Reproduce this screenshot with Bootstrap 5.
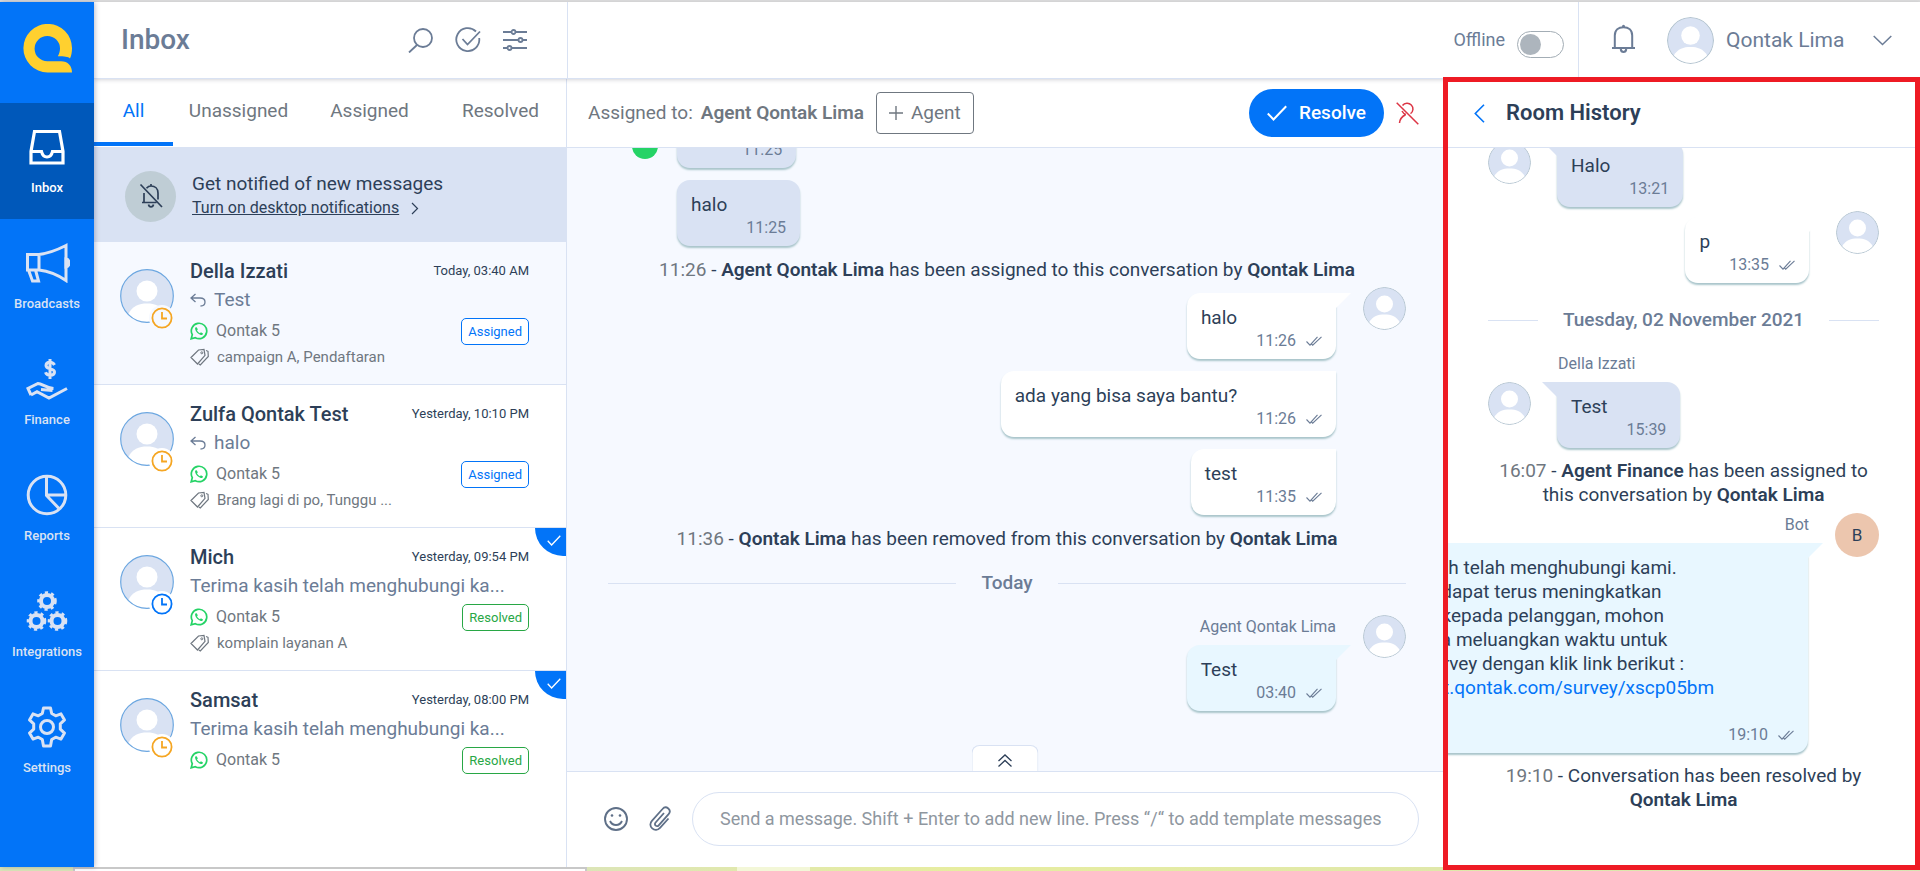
<!DOCTYPE html>
<html lang="en">
<head>
<meta charset="utf-8">
<meta name="viewport" content="width=device-width, initial-scale=1">
<title>Inbox</title>
<link href="https://cdn.jsdelivr.net/npm/bootstrap@5.3.0/dist/css/bootstrap.min.css" rel="stylesheet">
<style>
:root{--blue:#0274f8;--navy:#2d3f58;--slate:#6b7c96;--gray:#6f7780;--line:#d9e2f3;--mist:#f6f9ff;--cyan:#e8f7ff}
body{font-family:Roboto,"Liberation Sans",sans-serif;font-size:19px;line-height:24px;color:var(--navy);background:#fff}
svg{display:block;fill:none;stroke:currentColor;flex:none}
.page{height:100vh;border-top:2px solid #ddd}
.side{width:94px;background:var(--blue);box-shadow:1px 0 5px rgba(30,40,90,.3);z-index:3}
.brand-box{height:101px;padding:22px 0 0 23px}
.side .nav-link{height:116px;padding:20px 0 0;color:#d9e2f3;font-size:13px;line-height:18px;font-weight:500}
.side .nav-link.active{background:#0058ba;color:#fff}
.side .ico{height:48px}
.topbar{height:77px;border-bottom:1px solid var(--line);box-shadow:0 1px 4px rgba(60,60,80,.22);color:var(--slate);z-index:2}
.topbar-left{width:474px;padding:0 40px 0 27px;gap:22px;border-right:1px solid var(--line)}
.topbar h1{font-size:28px;line-height:30px;font-weight:500}
.topbar-user{width:342px;border-left:1px solid var(--line);padding:0 28px 0 33px;font-size:21px}
.icon-btn{padding:0;border:0;background:none;color:inherit}
.status{gap:12px;margin-right:14px}
.status-label{font-size:18px}
.status-switch.form-check-input{width:47px;height:27px;margin:0;border:1px solid #a3adb5;background-color:#fff;background-image:none;position:relative}
.status-switch::before{content:"";position:absolute;left:2px;top:2px;width:21px;height:21px;border-radius:50%;background:#adb5bd}
.rooms{width:473px;border-right:1px solid var(--line)}
.tabs{height:68px}
.tabs .nav-link{color:var(--gray);padding:20px 0 0;text-align:center;flex:1;height:67px}
.tabs .nav-link.active{flex:0 0 79px;color:var(--blue);border-bottom:4px solid var(--blue)}
.notice{height:95px;background:var(--line);padding:3px 31px 0;gap:16px}
.notice-ico{width:51px;height:51px;border-radius:50%;background:#bfcdd5}
.notice a{font-size:16px;color:inherit}
.room{padding:15px 37px 17px 26px;border-bottom:1px solid var(--line);gap:16px;position:relative}
.room:last-child{border-bottom:0}
.room.current{background:var(--mist)}
.face{width:43px;height:43px;border-radius:50%;position:relative;flex:none}
.room .face{width:54px;height:54px;margin-top:12px}
.topbar .face{width:47px;height:47px;margin-left:32px}
.clock{position:absolute;right:-1px;bottom:-8px;border-radius:50%;background:#fff;padding:2px;color:#f5a623}
.room.current .clock{background:var(--mist)}
.clock.open{color:var(--blue)}
.room-name{font-size:20px;line-height:28px;font-weight:500}
.room-date{font-size:13px;line-height:28px}
.room-text{line-height:30px;color:var(--slate)}
.room-channel{font-size:16px;line-height:32px;color:var(--gray)}
.room-tags{font-size:15px;line-height:20px;color:var(--gray)}
.tag-state{border:1px solid;border-radius:5px;font-size:13px;line-height:25px;padding:0 6px;color:var(--blue);background:#fff}
.tag-state.done{color:#28a745}
.corner{position:absolute;right:0;top:0;width:31px;height:28px;border-radius:0 0 0 28px;background:var(--blue);color:#fff;padding:7px 0 0 11px}
.chat-head{height:69px;border-bottom:1px solid var(--line);padding:0 24px 0 21px;color:var(--gray)}
.btn-agent{--bs-btn-padding-x:12px;--bs-btn-padding-y:8px;--bs-btn-font-size:19px;--bs-btn-line-height:24px;--bs-btn-color:#6f7780;--bs-btn-border-color:#6f7780;--bs-btn-border-radius:4px}
.btn-resolve{--bs-btn-padding-x:17px;--bs-btn-padding-y:11px;--bs-btn-font-size:19px;--bs-btn-line-height:24px;--bs-btn-bg:#0274f8;--bs-btn-color:#fff;--bs-btn-font-weight:500;--bs-btn-border-radius:24px}
.log{background:var(--mist);padding:0 37px 60px 41px;overflow:hidden;min-height:0}
.entry{gap:26px;align-items:flex-start;flex:none}
.entry + .entry{margin-top:12px}
.entry.out{flex-direction:row-reverse;gap:27px}
.entry.out .face{margin-top:-6px}
.entry.out .face.raised{margin-top:-30px}
.entry.out.follow{margin-right:70px}
.entry.follow-in{margin-left:69px}
.bubble{display:grid;grid-template-columns:auto auto;padding:13px 14px 7px;height:66px;white-space:nowrap;border-radius:13px;background:var(--line);position:relative;box-shadow:0 2px 2px #a9c5cb;flex:none;line-height:24px}
.bubble .when{grid-area:2/2;font-size:16px;line-height:22px;color:var(--slate);padding-left:19px;display:flex;align-items:center;gap:10px}
.bubble.tall{height:auto}
.bubble.tall .when{padding-left:14px}
.out .bubble{background:#fff;border-top-right-radius:0}
.out .bubble.mine{background:var(--cyan)}
.tail::after{content:"";position:absolute;top:0;left:-15px;width:30px;height:15px;background:inherit;clip-path:polygon(0 0,100% 0,50% 100%)}
.out .tail::after{left:auto;right:-15px}
.who{font-size:16px;line-height:20px;color:var(--slate)}
.event{text-align:center;margin:12px 0 11px;flex:none}
.event time{color:var(--gray)}
.event b,.assignee{font-weight:600}
.day{display:flex;align-items:center;font-weight:500;color:var(--slate);flex:none;margin:20px 0 22px}
.day::before,.day::after{content:"";height:1px;background:var(--line);flex:1}
.day span{padding:0 25px}
.wa-dot{position:absolute;width:26px;height:26px;border-radius:50%;right:-7px;bottom:-14px;background:#25d366}
.expand{position:absolute;left:50%;bottom:0;transform:translateX(-50%);width:67px;height:26px;padding:4px 0 0;border:1px solid var(--line);border-bottom:0;border-radius:8px 8px 0 0;background:#fff;color:var(--navy)}
.composer{height:96px;border-top:1px solid var(--line);padding:0 24px 2px 37px;gap:21px;color:#5f7088}
.composer input.form-control{height:54px;border-radius:27px;border:1px solid var(--line);padding:0 27px;font-size:18px;color:var(--navy)}
.composer input::placeholder{color:#8f979f}
.history{width:477px;margin:-2px 0 -3px;border:5px solid #ee1b24;z-index:4;background:#fff}
.history-head{height:66px;border-bottom:1px solid var(--line);padding:0 26px 3px;gap:21px}
.history-head h2{font-size:22px;line-height:24px;font-weight:600}
.history-log{padding:0 36px 53px 40px;overflow:hidden;min-height:0}
.history .entry + .entry{margin-top:10px}
.history .event{margin-top:11px}
.history .day{margin-top:25px}
.bot-face{width:44px;height:44px;background:#ecc6ae;font-size:17px;text-align:center;line-height:44px}
.ground{height:4px;background:linear-gradient(90deg,#dce5b8 30%,#e7eda0 50%,#d9e3b4)}
.ground-window{width:514px;margin-left:73px;height:4px;background:#fff;border:solid #c8c8c8;border-width:2px 2px 0}
.ground-glow{width:73px;height:4px;margin-left:150px;background:#f3f7d8}
</style>
</head>
<body>
<svg width="0" height="0" class="position-absolute" aria-hidden="true">
  <symbol id="person" viewBox="0 0 43 43"><circle cx="21.500" cy="21.500" r="21" fill="#d9e2f3" stroke="none"/><circle cx="21.500" cy="17" r="8.500" fill="#fff" stroke="none"/><path d="M6 35.500C10 29 15 27.500 21.500 27.500S33 29 37 35.500C33 40 28 42.500 21.500 42.500S10 40 6 35.500Z" fill="#fff" stroke="none"/><circle cx="21.500" cy="21.500" r="21" fill="none" stroke="#b5c5d0" stroke-width="1"/></symbol>
  <symbol id="person-blue" viewBox="0 0 54 54"><circle cx="27" cy="27" r="26" fill="#d9e2f3" stroke="none"/><circle cx="27" cy="22" r="10.500" fill="#fff" stroke="none"/><path d="M8.500 45C12 37 19 34.500 27 34.500S42 37 45.500 45C41 50 35 53 27 53S13 50 8.500 45Z" fill="#fff" stroke="none"/><circle cx="27" cy="27" r="26.300" fill="none" stroke="#6ba6e0" stroke-width="1.200"/></symbol>
  <symbol id="clock" viewBox="0 0 22 22"><circle cx="11" cy="11" r="9.600" stroke-width="1.800"/><path d="M11 5v6.500h5" stroke-width="1.800"/></symbol>
  <symbol id="ticks" viewBox="0 0 16 10"><path d="M.5 5.500 4 9.200 11.500.8M5 7.500l1.700 1.700L15.500.8" stroke-width="1.100"/></symbol>
  <symbol id="reply" viewBox="0 0 16 14"><path d="M5.500 1 1 5l4.500 4M1.500 5H10c3 0 5 1.500 5 4s-1.500 4-4.500 4" stroke-width="1.300"/></symbol>
  <symbol id="wa" viewBox="0 0 18 18"><path d="M1.200 16.800l1.100-4.100A7.700 7.700 0 1 1 5.300 15.700Z" stroke="#25d366" stroke-width="1.700"/><path d="M6.300 4.900c-.8.200-1.400 1.100-1.200 2.200.5 2.800 3 5.300 5.700 5.900 1.100.2 2-.4 2.200-1.500l-2.100-1.300-.9 1C8.700 10.700 7.600 9.600 7 8.200l.9-.9Z" fill="#25d366" stroke="none"/></symbol>
  <symbol id="tags" viewBox="0 0 19 18"><path d="M1 9.500 8.500 2 14 1.300l1 6L7.500 16ZM16 2.500l2 .8.300 5.200-8 8.500-1.500-1" stroke-width="1.200"/><circle cx="11.800" cy="4.800" r="1" stroke-width="1"/></symbol>
  <symbol id="tick" viewBox="0 0 20 16"><path d="M.8 8.500 6.500 14.500 19.200 1.200" stroke-width="2"/></symbol>
</svg>

<div class="page d-flex flex-column">
<div class="d-flex flex-fill" style="min-height:0">
  <nav class="side d-flex flex-column flex-shrink-0 position-relative">
    <a class="brand-box d-block" href="#" aria-label="Home"><svg width="49" height="49" viewBox="0 0 49 49"><path fill="#ffd02f" stroke="none" d="M49 48.500H24.500A24.300 24.300 0 1 1 49 24.300C49 28.200 48.400 31.500 47 34.500 45 32.700 41.500 32.300 34.800 32.300 36.200 30 37 27.300 37 24.500A12.700 12.700 0 1 0 24.300 37.300H38C45 37.300 49 42 49 48.500Z"/></svg></a>
    <div class="nav flex-column text-center">
      <a class="nav-link active" href="#"><span class="ico d-flex justify-content-center align-items-center"><svg width="36" height="36" viewBox="0 0 36 36" stroke-width="3.200"><path d="M5.500 2.500h25l3.500 20v11.500H2V22.500ZM2 22.500h10.500c.8 3.500 2.500 5.500 5.500 5.500s4.700-2 5.500-5.500H34"/></svg></span><span class="d-block mt-2">Inbox</span></a>
      <a class="nav-link" href="#"><span class="ico d-flex justify-content-center align-items-center"><svg width="46" height="40" viewBox="0 0 46 40" stroke-width="3"><path d="M3.500 11.500H15C24 10.500 35 6 42 2.500v35C34 32 24 28 15 27H3.500ZM15 11.500V27M4.500 27l4 11h6L11.500 27"/><path d="M42 16v8c4-.5 4-7.500 0-8Z" fill="currentColor"/></svg></span><span class="d-block mt-2">Broadcasts</span></a>
      <a class="nav-link" href="#"><span class="ico d-flex justify-content-center align-items-center"><svg width="42" height="42" viewBox="0 0 42 42" stroke-width="3"><path d="M28.500 7c-1-2-2.500-2.700-4.500-2.700-2.500 0-4 1.200-4 3.200 0 4.500 8.500 2.200 8.500 6.500 0 2-1.700 3.300-4.300 3.300-2.400 0-4-1-4.700-3M24 1v20"/><path d="M5 37 2 30.500 12 25.500C16 25.500 20 30 27.500 30.500M5 37l6-3.300L23 40l18-9.500M15 31.500l11.500 1"/></svg></span><span class="d-block mt-2">Finance</span></a>
      <a class="nav-link" href="#"><span class="ico d-flex justify-content-center align-items-center"><svg width="42" height="42" viewBox="0 0 42 42" stroke-width="3"><circle cx="21" cy="21" r="18.800"/><path d="M20.500 2v19.500L33.500 35M20.500 21H40"/></svg></span><span class="d-block mt-2">Reports</span></a>
      <a class="nav-link" href="#"><span class="ico d-flex justify-content-center align-items-center"><svg width="42" height="42" viewBox="0 0 42 42"><g stroke-width="4"><circle cx="21" cy="11" r="6"/><circle cx="10.500" cy="31" r="6"/><circle cx="31.500" cy="31" r="6"/></g><g stroke-width="2.600" stroke-dasharray="3.200 3.080"><circle cx="21" cy="11" r="8.500"/><circle cx="10.500" cy="31" r="8.500"/><circle cx="31.500" cy="31" r="8.500"/></g></svg></span><span class="d-block mt-2">Integrations</span></a>
      <a class="nav-link" href="#"><span class="ico d-flex justify-content-center align-items-center"><svg width="42" height="42" viewBox="0 0 42 42" stroke-width="3" stroke-linejoin="round"><circle cx="21" cy="21" r="6.500"/><path d="M17.500 2h7l1.200 5.500 4 2.300 5.300-1.900 3.500 6-4.200 3.900v5.400l4.200 3.900-3.500 6-5.300-1.900-4 2.300L24.500 40h-7l-1.200-6.500-4-2.300L7 33.100l-3.500-6 4.200-3.900v-5.400L3.500 13.900l3.500-6 5.300 1.900 4-2.300Z"/></svg></span><span class="d-block mt-2">Settings</span></a>
    </div>
  </nav>

  <div class="d-flex flex-column flex-fill" style="min-width:0">
    <header class="topbar d-flex flex-shrink-0 position-relative bg-white">
      <div class="topbar-left d-flex align-items-center">
        <h1 class="m-0 me-auto">Inbox</h1>
        <button class="icon-btn" aria-label="Search"><svg width="25" height="25" viewBox="0 0 25 25" stroke-width="1.800"><circle cx="15" cy="10" r="9"/><path d="M9 17 1 24.500"/></svg></button>
        <button class="icon-btn" aria-label="Resolve"><svg width="26" height="26" viewBox="0 0 26 26" stroke-width="1.800"><path d="M21 4.500A11.500 11.500 0 1 0 24.200 11M7.500 12l5 5.500L25 4.500"/></svg></button>
        <button class="icon-btn" aria-label="Filter"><svg width="24" height="22" viewBox="0 0 24 22" stroke-width="1.800"><path d="M0 3h8.500M12.500 3H24M0 11h15.500M19.500 11H24M0 19h4.500M8.500 19H24"/><circle cx="10.500" cy="3" r="2"/><circle cx="17.500" cy="11" r="2"/><circle cx="6.500" cy="19" r="2"/></svg></button>
      </div>
      <div class="status d-flex align-items-center ms-auto form-check form-switch p-0 mb-0">
        <label class="status-label" for="status">Offline</label>
        <input class="form-check-input status-switch mt-2 float-none" type="checkbox" role="switch" id="status">
      </div>
      <div class="topbar-user d-flex align-items-center">
        <button class="icon-btn mb-1" aria-label="Notifications"><svg width="23" height="29" viewBox="0 0 23 29" stroke-width="2"><path d="M0 24h23M2.800 24V11.500C2.800 6 6.500 3.200 11.500 3.200S20.200 6 20.200 11.500V24M8.700 25c.3 2 1.300 3 2.800 3s2.500-1 2.800-3"/><circle cx="11.500" cy="2.300" r="1.500" fill="currentColor" stroke="none"/></svg></button>
        <svg class="face me-2"><use href="#person"/></svg>
        <span class="ms-1">Qontak Lima</span>
        <button class="icon-btn ms-auto" aria-label="Account menu"><svg width="19" height="11" viewBox="0 0 19 11" stroke-width="1.500"><path d="M.7 1 9.500 9.500 18.300 1"/></svg></button>
      </div>
    </header>

    <div class="d-flex flex-fill" style="min-height:0">
      <section class="rooms flex-shrink-0 bg-white">
        <nav class="tabs nav flex-nowrap">
          <a class="nav-link active" href="#">All</a><a class="nav-link" href="#">Unassigned</a><a class="nav-link" href="#">Assigned</a><a class="nav-link" href="#">Resolved</a>
        </nav>
        <div class="notice d-flex align-items-center">
          <span class="notice-ico d-flex align-items-center justify-content-center"><svg width="24" height="26" viewBox="0 0 24 26" stroke-width="1.700"><path d="M1.500 1.500 23 24M3 19.500h14.500M5 19.500V10M7.500 5.200C8.800 3.700 10.300 3 12 3c4 0 7 2.500 7 7v6.500M9.500 21.500c.3 1.500 1.100 2.300 2.500 2.300s2.200-.8 2.500-2.300M12 1v2"/></svg></span>
          <div><div>Get notified of new messages</div>
          <div class="d-flex align-items-center gap-2"><a href="#">Turn on desktop notifications</a><svg class="ms-1" width="8" height="13" viewBox="0 0 8 13" stroke-width="1.200"><path d="M1 1l5.500 5.500L1 12"/></svg></div></div>
        </div>

        <article class="room current d-flex">
          <div class="face"><svg width="54" height="54"><use href="#person-blue"/></svg><svg class="clock" width="26" height="26"><use href="#clock"/></svg></div>
          <div class="flex-fill">
            <div class="d-flex justify-content-between"><span class="room-name">Della Izzati</span><time class="room-date">Today, 03:40 AM</time></div>
            <div class="room-text d-flex align-items-center gap-2"><svg width="16" height="14"><use href="#reply"/></svg>Test</div>
            <div class="room-channel d-flex align-items-center gap-2"><svg width="18" height="18"><use href="#wa"/></svg>Qontak 5<span class="tag-state ms-auto">Assigned</span></div>
            <div class="room-tags d-flex align-items-center gap-2"><svg width="19" height="18"><use href="#tags"/></svg>campaign A, Pendaftaran</div>
          </div>
        </article>
        <article class="room d-flex">
          <div class="face"><svg width="54" height="54"><use href="#person-blue"/></svg><svg class="clock" width="26" height="26"><use href="#clock"/></svg></div>
          <div class="flex-fill">
            <div class="d-flex justify-content-between"><span class="room-name">Zulfa Qontak Test</span><time class="room-date">Yesterday, 10:10 PM</time></div>
            <div class="room-text d-flex align-items-center gap-2"><svg width="16" height="14"><use href="#reply"/></svg>halo</div>
            <div class="room-channel d-flex align-items-center gap-2"><svg width="18" height="18"><use href="#wa"/></svg>Qontak 5<span class="tag-state ms-auto">Assigned</span></div>
            <div class="room-tags d-flex align-items-center gap-2"><svg width="19" height="18"><use href="#tags"/></svg>Brang lagi di po, Tunggu ...</div>
          </div>
        </article>
        <article class="room d-flex">
          <span class="corner"><svg width="16" height="11" viewBox="0 0 20 16"><use href="#tick"/></svg></span>
          <div class="face"><svg width="54" height="54"><use href="#person-blue"/></svg><svg class="clock open" width="26" height="26"><use href="#clock"/></svg></div>
          <div class="flex-fill">
            <div class="d-flex justify-content-between"><span class="room-name">Mich</span><time class="room-date">Yesterday, 09:54 PM</time></div>
            <div class="room-text">Terima kasih telah menghubungi ka...</div>
            <div class="room-channel d-flex align-items-center gap-2"><svg width="18" height="18"><use href="#wa"/></svg>Qontak 5<span class="tag-state done ms-auto">Resolved</span></div>
            <div class="room-tags d-flex align-items-center gap-2"><svg width="19" height="18"><use href="#tags"/></svg>komplain layanan A</div>
          </div>
        </article>
        <article class="room d-flex">
          <span class="corner"><svg width="16" height="11" viewBox="0 0 20 16"><use href="#tick"/></svg></span>
          <div class="face"><svg width="54" height="54"><use href="#person-blue"/></svg><svg class="clock" width="26" height="26"><use href="#clock"/></svg></div>
          <div class="flex-fill">
            <div class="d-flex justify-content-between"><span class="room-name">Samsat</span><time class="room-date">Yesterday, 08:00 PM</time></div>
            <div class="room-text">Terima kasih telah menghubungi ka...</div>
            <div class="room-channel d-flex align-items-center gap-2"><svg width="18" height="18"><use href="#wa"/></svg>Qontak 5<span class="tag-state done ms-auto">Resolved</span></div>
          </div>
        </article>
      </section>

      <main class="d-flex flex-column flex-fill bg-white" style="min-width:0">
        <div class="chat-head d-flex align-items-center flex-shrink-0">
          <span class="me-2">Assigned to:</span><span class="assignee me-2">Agent Qontak Lima</span>
          <button class="btn btn-agent d-flex align-items-center gap-2 ms-1"><svg width="14" height="14" viewBox="0 0 14 14" stroke-width="1.400"><path d="M7 0v14M0 7h14"/></svg>Agent</button>
          <button class="btn btn-resolve d-flex align-items-center gap-2 ms-auto me-2"><svg class="me-1" width="20" height="16"><use href="#tick"/></svg>Resolve</button>
          <button class="icon-btn ms-1 text-danger" aria-label="Unassign"><svg width="23" height="23" viewBox="0 0 23 23" stroke-width="1.500"><path d="M.7.700 22.300 22.300M6.500 3.500A5.800 5.800 0 1 1 14.500 11.700M3.500 21c.3-3.500 2.200-6.500 6-8.300M6 9c1 2 2 3 4 3.500"/></svg></button>
        </div>
        <div class="position-relative d-flex flex-column flex-fill" style="min-height:0">
          <div class="log d-flex flex-column justify-content-end flex-fill">
            <div class="entry d-flex"><div class="face"><svg width="43" height="43"><use href="#person"/></svg><span class="wa-dot"></span></div><div class="bubble tail"><span>test</span><time class="when">11:25</time></div></div>
            <div class="entry follow-in d-flex"><div class="bubble"><span>halo</span><time class="when">11:25</time></div></div>
            <div class="event"><time>11:26</time> - <b>Agent Qontak Lima</b> has been assigned to this conversation by <b>Qontak Lima</b></div>
            <div class="entry out d-flex"><svg class="face"><use href="#person"/></svg><div class="bubble tail"><span>halo</span><time class="when">11:26 <svg width="16" height="10"><use href="#ticks"/></svg></time></div></div>
            <div class="entry out follow d-flex"><div class="bubble"><span>ada yang bisa saya bantu?</span><time class="when">11:26 <svg width="16" height="10"><use href="#ticks"/></svg></time></div></div>
            <div class="entry out follow d-flex"><div class="bubble"><span>test</span><time class="when">11:35 <svg width="16" height="10"><use href="#ticks"/></svg></time></div></div>
            <div class="event mb-0"><time>11:36</time> - <b>Qontak Lima</b> has been removed from this conversation by <b>Qontak Lima</b></div>
            <div class="day"><span>Today</span></div>
            <div class="who text-end mb-2" style="margin-right:70px">Agent Qontak Lima</div>
            <div class="entry out d-flex"><svg class="face raised"><use href="#person"/></svg><div class="bubble tail mine"><span>Test</span><time class="when">03:40 <svg width="16" height="10"><use href="#ticks"/></svg></time></div></div>
          </div>
          <button class="expand d-flex justify-content-center align-items-center" aria-label="Show templates"><svg width="15" height="13" viewBox="0 0 15 13" stroke-width="1.300"><path d="M1 7l6.500-6L14 7M1 12.500l6.500-6 6.500 6"/></svg></button>
        </div>
        <form class="composer d-flex align-items-center flex-shrink-0">
          <button type="button" class="icon-btn" aria-label="Emoji"><svg width="24" height="24" viewBox="0 0 24 24" stroke-width="1.900"><circle cx="12" cy="12" r="11"/><path d="M6 14c2.500 5.300 9.500 5.300 12 0"/><circle cx="8" cy="8.500" r="1.300" fill="currentColor" stroke="none"/><circle cx="16" cy="8.500" r="1.300" fill="currentColor" stroke="none"/></svg></button>
          <button type="button" class="icon-btn" aria-label="Attach file"><svg width="22" height="25" viewBox="0 0 22 25" stroke-width="1.800"><path d="M19.500 12.500 11 21.800c-2.200 2.400-5.500 2.600-7.800.6-2.300-2-2.400-5.300-.3-7.600L13.500 3c1.600-1.900 4-2 5.800-.5 1.700 1.500 1.900 3.800.3 5.700L9.700 19.300c-.9 1-2.100 1-3 .3-1-.8-1-2.100-.1-3.100L15 7"/></svg></button>
          <input class="form-control" type="text" aria-label="Message" placeholder="Send a message. Shift + Enter to add new line. Press “/“ to add template messages">
        </form>
      </main>

      <aside class="history d-flex flex-column flex-shrink-0 position-relative">
        <div class="history-head d-flex align-items-center flex-shrink-0">
          <button class="icon-btn" aria-label="Back" style="color:#0274f8"><svg width="11" height="19" viewBox="0 0 11 19" stroke-width="1.600"><path d="M10 .7 1.300 9.500 10 18.300"/></svg></button>
          <h2 class="m-0">Room History</h2>
        </div>
        <div class="history-log d-flex flex-column justify-content-end flex-fill">
          <div class="entry d-flex"><svg class="face"><use href="#person"/></svg><div class="bubble tail"><span>Halo</span><time class="when">13:21</time></div></div>
          <div class="entry out d-flex"><svg class="face"><use href="#person"/></svg><div class="bubble tail"><span>p</span><time class="when">13:35 <svg width="16" height="10"><use href="#ticks"/></svg></time></div></div>
          <div class="day"><span>Tuesday, 02 November 2021</span></div>
          <div class="who mb-2" style="margin-left:70px">Della Izzati</div>
          <div class="entry d-flex"><svg class="face"><use href="#person"/></svg><div class="bubble tail"><span>Test</span><time class="when">15:39</time></div></div>
          <div class="event mb-0"><time>16:07</time> - <b>Agent Finance</b> has been assigned to this conversation by <b>Qontak Lima</b></div>
          <div class="who text-end mt-1 mb-2 pt-1" style="margin-right:70px">Bot</div>
          <div class="entry out d-flex"><span class="face bot-face raised">B</span><div class="bubble tall tail mine"><span>Terima kasih telah menghubungi kami.<br>Agar kami dapat terus meningkatkan<br>pelayanan kepada pelanggan, mohon<br>kiranya bisa meluangkan waktu untuk<br>mengisi survey dengan klik link berikut :<br><a class="text-decoration-none" style="color:#0274f8" href="#">https://chat.qontak.com/survey/xscp05bm</a><br>&nbsp;</span><time class="when">19:10 <svg width="16" height="10"><use href="#ticks"/></svg></time></div></div>
          <div class="event mb-0"><time>19:10</time> - Conversation has been resolved by<br><b>Qontak Lima</b></div>
        </div>
      </aside>
    </div>
  </div>
</div>
<div class="ground d-flex flex-shrink-0"><div class="ground-window"></div><div class="ground-glow"></div></div>
</div>
<script src="https://cdn.jsdelivr.net/npm/bootstrap@5.3.0/dist/js/bootstrap.bundle.min.js"></script>
</body>
</html>
